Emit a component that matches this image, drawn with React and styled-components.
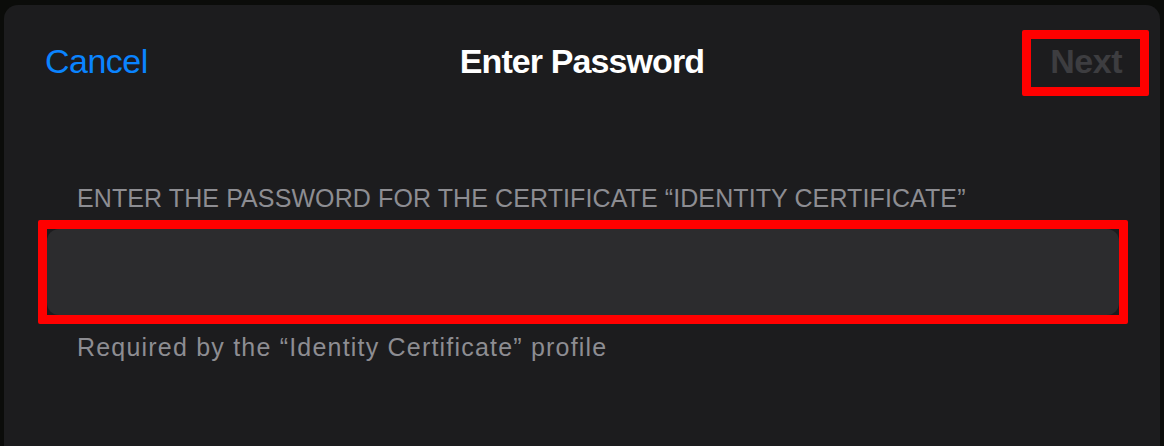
import React from "react";
import styled, { createGlobalStyle } from "styled-components";

const Global = createGlobalStyle`
  html, body {
    margin: 0;
    padding: 0;
    background: #0b0c0a;
    overflow: hidden;
  }
  body {
    font-family: "Liberation Sans", Arial, sans-serif;
  }
`;

const Page = styled.div`
  height: 446px;
  padding: 5px 4px 0 4px;
  box-sizing: border-box;
`;

const Sheet = styled.div`
  height: 460px;
  background: #1c1c1e;
  border-radius: 14px 14px 0 0;
`;

const NavBar = styled.div`
  display: grid;
  grid-template-columns: 1fr auto 1fr;
  align-items: start;
  padding: 25px 41px 0 41px;
`;

const NavText = styled.div`
  font-size: 34px;
  line-height: 34px;
  padding-top: 14px;
  white-space: nowrap;
`;

const CancelBtn = styled(NavText)`
  color: #0a84ff;
  letter-spacing: -0.5px;
  justify-self: start;
`;

const Title = styled(NavText)`
  color: #ffffff;
  font-weight: 700;
  letter-spacing: -0.9px;
`;

const Highlight = styled.div`
  border: 9px solid #ff0000;
  border-radius: 2px;
`;

const NextBox = styled(Highlight)`
  justify-self: end;
  margin-right: -30px;
  padding: 5px 18px 9px 19px;
  font-size: 34px;
  line-height: 34px;
  font-weight: 700;
  letter-spacing: -0.5px;
  color: #3d3d40;
`;

const Body = styled.div`
  padding: 87px 32px 0 34px;
`;

const Caption = styled.div`
  padding-left: 39px;
  font-size: 25px;
  line-height: 30px;
  color: #8d8d92;
  white-space: nowrap;
  letter-spacing: ${(p) => p.$spacing || "0px"};
`;

const FieldFrame = styled(Highlight)`
  margin: 7px 0 8px 0;
`;

const Field = styled.div`
  height: 86px;
  background: #2c2c2e;
  border-radius: 12px;
`;

export default function App() {
  return (
    <>
      <Global />
      <Page>
        <Sheet>
          <NavBar>
            <CancelBtn>Cancel</CancelBtn>
            <Title>Enter Password</Title>
            <NextBox>Next</NextBox>
          </NavBar>
          <Body>
            <Caption $spacing="0.1px">
              ENTER THE PASSWORD FOR THE CERTIFICATE “IDENTITY CERTIFICATE”
            </Caption>
            <FieldFrame>
              <Field />
            </FieldFrame>
            <Caption $spacing="1.2px">
              Required by the “Identity Certificate” profile
            </Caption>
          </Body>
        </Sheet>
      </Page>
    </>
  );
}
